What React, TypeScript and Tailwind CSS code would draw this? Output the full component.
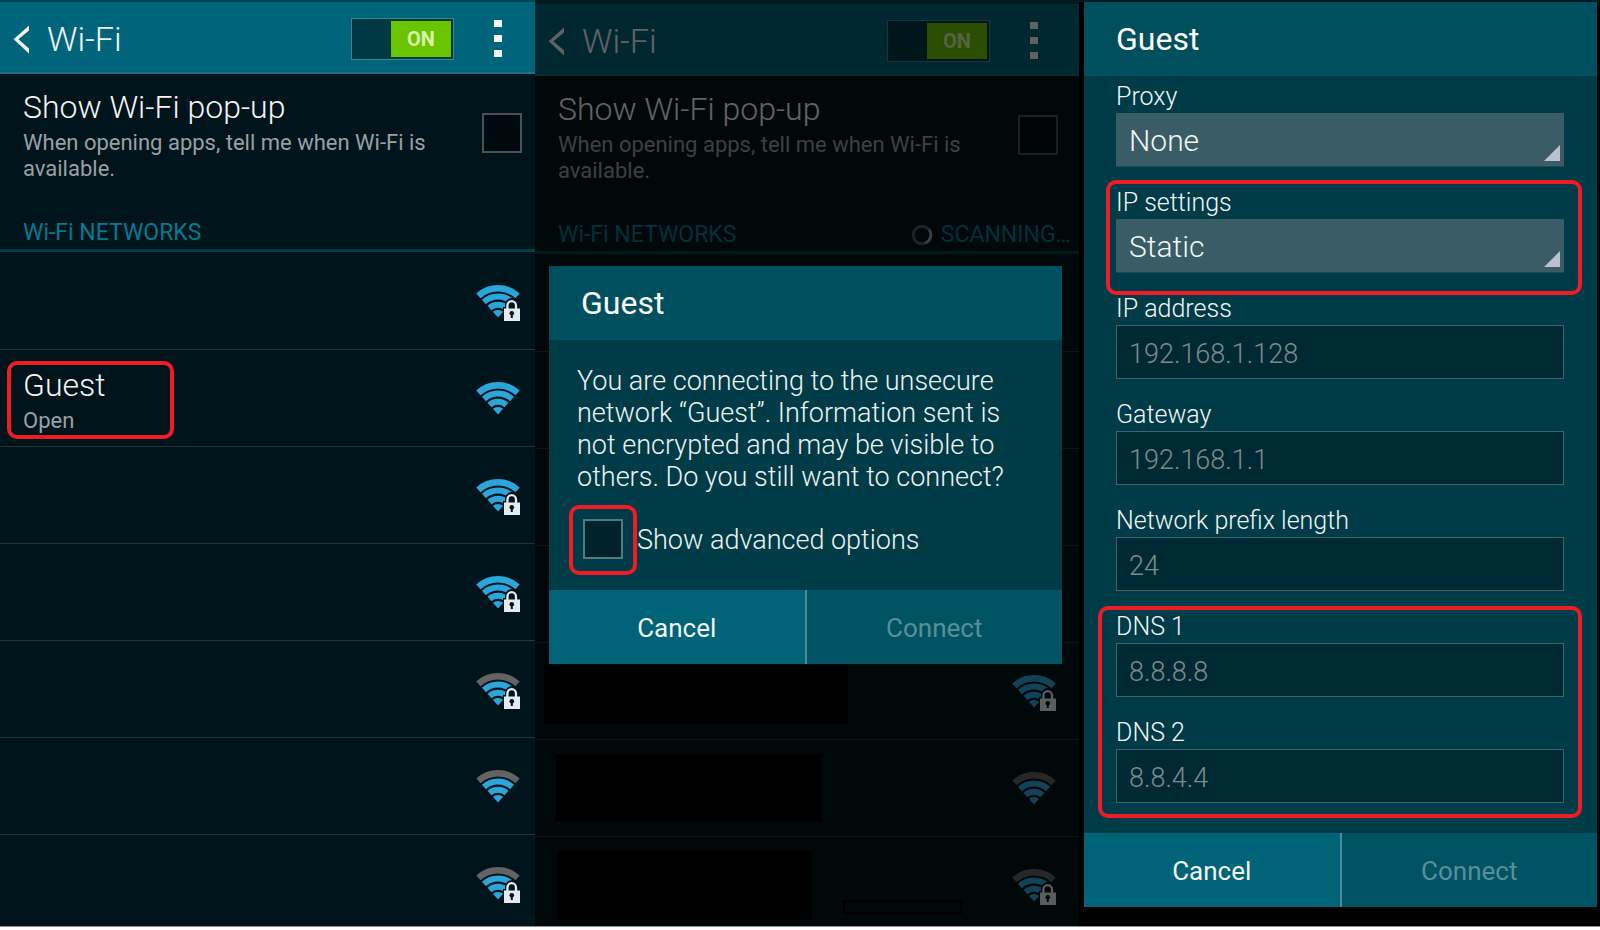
import { useState } from "react";
import clsx from "clsx";

type Network = {
  name?: string;
  status?: string;
  secured: boolean;
  weak?: boolean;
};

const networks: Network[] = [
  { secured: true },
  { name: "Guest", status: "Open", secured: false },
  { secured: true },
  { secured: true },
  { secured: true, weak: true },
  { secured: false, weak: true },
  { secured: true, weak: true },
];

const nearbyNetworks: Network[] = [
  { secured: true },
  { secured: false },
  { secured: true },
  { secured: true },
  { secured: true },
  { secured: false, weak: true },
  { secured: true, weak: true },
];

const addressFields = [
  { id: "ip-address", label: "IP address", value: "192.168.1.128" },
  { id: "gateway", label: "Gateway", value: "192.168.1.1" },
  { id: "prefix", label: "Network prefix length", value: "24" },
];

const dnsFields = [
  { id: "dns1", label: "DNS 1", value: "8.8.8.8" },
  { id: "dns2", label: "DNS 2", value: "8.8.4.4" },
];

function SignalIcon({ secured, weak }: { secured: boolean; weak?: boolean }) {
  return (
    <svg width="45" height="39" viewBox="0 0 45 39" fill="none" className="shrink-0">
      <path d="M2.4 11.8A29.25 29.25 0 0 1 41.6 11.8" stroke={weak ? "#636363" : "#2ba6da"} strokeWidth="6.4" />
      <path d="M7.95 17.9A21 21 0 0 1 36.05 17.9" stroke="#2ba6da" strokeWidth="6" />
      <path d="M13.5 24A12.75 12.75 0 0 1 30.5 24" stroke="#2ba6da" strokeWidth="6" />
      <path d="M22 33.5L16.9 27.8A8 8 0 0 1 27.1 27.8Z" fill="#2ba6da" />
      {secured && (
        <>
          <path d="M27 38V23h2v-2a6.5 6.5 0 0 1 14 0v2h2v15z" fill="#00141b" />
          <path d="M31.4 25v-3.2a4.3 4.6 0 0 1 8.6 0V25" stroke="#e3ebf0" strokeWidth="2.3" />
          <rect x="28" y="24.5" width="16" height="12.5" fill="#e3ebf0" />
          <circle cx="35.8" cy="29.2" r="2.3" fill="#00141b" />
          <path d="M35.8 29v5" stroke="#00141b" strokeWidth="2" />
        </>
      )}
    </svg>
  );
}

function WifiScreen({ items, scanning = false }: { items: Network[]; scanning?: boolean }) {
  const [on, setOn] = useState(true);
  const edge = scanning ? "pr-2" : "pr-0";
  const popupId = scanning ? "popup-scan" : "popup";

  return (
    <div className={clsx("h-full overflow-hidden bg-[#00141b]", scanning ? "border-t-4 border-[#004450]" : "border-t-2 border-[#004450]")}>
      <header className={clsx("h-[72px] border-b-2 border-[#1f6f7e] bg-[#00657a]", edge)}>
        <div className="flex h-full items-center pl-3 pr-[33px] pt-[3px]">
          <button type="button" aria-label="Back" className="mr-[15px] shrink-0">
            <svg width="20" height="30" viewBox="0 0 20 30" fill="none">
              <path d="M17 1.5v5L6.4 15.2 17 24.5v5L1.6 15.2z" fill="#f2f6f7" />
            </svg>
          </button>
          <h1 className="pt-px text-[34px] font-light leading-10 text-[#f2f6f7]">Wi-Fi</h1>
          <button
            type="button"
            role="switch"
            aria-checked={on}
            onClick={() => setOn(!on)}
            className="ml-auto flex h-[42px] w-[103px] shrink-0 justify-end border border-[#3f8391] bg-[#003844] p-0.5"
          >
            <span className="flex h-full w-[60px] items-center justify-center bg-[#6ac500] text-xl font-bold text-[#d9f3a8]">
              ON
            </span>
          </button>
          <button type="button" aria-label="More options" className="ml-10 flex shrink-0 flex-col gap-2">
            <span className="h-[7px] w-2 bg-[#f2f6f7]" />
            <span className="h-[7px] w-2 bg-[#f2f6f7]" />
            <span className="h-[7px] w-2 bg-[#f2f6f7]" />
          </button>
        </div>
      </header>

      <div className={edge}>
        <div className="flex h-[126px] justify-between pl-[23px] pr-[13px] pt-[13px]">
          <label htmlFor={popupId} className="w-[425px]">
            <span className="block text-[32px] font-light leading-10 text-[#f5f5f5]">Show Wi-Fi pop-up</span>
            <span className="mt-[3px] block text-[22px] leading-[26px] text-[#98a1a4]">
              When opening apps, tell me when Wi-Fi is available.
            </span>
          </label>
          <input
            id={popupId}
            type="checkbox"
            className="mt-[26px] size-10 shrink-0 appearance-none border-2 border-[#4a5458] bg-[#000a0e] checked:bg-[#6ac500]"
          />
        </div>
      </div>

      <div className={clsx("h-[52px] border-b-3 border-[#003f4a]", edge)}>
        <div className="flex h-full items-end justify-between pl-[23px]">
          <h2 className="text-[23px] leading-8 text-[#007b92]">Wi-Fi NETWORKS</h2>
          {scanning && (
            <div className="flex items-center gap-2 text-[23px] leading-8 text-[#007b92]">
              <svg width="22" height="22" viewBox="0 0 22 22" fill="none">
                <circle cx="11" cy="11" r="8.8" stroke="#3a5f69" strokeWidth="3" />
                <path d="M18 5.5A8.8 8.8 0 0 1 14.5 19" stroke="#8aa3ab" strokeWidth="2.6" />
              </svg>
              SCANNING…
            </div>
          )}
        </div>
      </div>

      <ul className="pt-px">
        {items.map((network, i) => (
          <li key={i} className={clsx("h-[97px] border-b border-[#26343a]", edge)}>
            <div className="flex items-start justify-between pl-[23px] pr-3.5">
              <div className="pt-[15px]">
                {network.name && (
                  <>
                    <p className="text-[32px] font-light leading-10 text-[#f5f5f5]">{network.name}</p>
                    <p className="text-[22px] leading-8 text-[#98a1a4]">{network.status}</p>
                  </>
                )}
              </div>
              <div className="pt-[31px]">
                <SignalIcon secured={network.secured} weak={network.weak} />
              </div>
            </div>
          </li>
        ))}
      </ul>
    </div>
  );
}

function DialogButtons() {
  return (
    <div className="flex h-[74px] text-[26px]">
      <button type="button" className="flex-1 border-r-2 border-[#4d8b98] bg-[#006378] pt-[3px] text-[#f2f6f7]">
        Cancel
      </button>
      <button type="button" disabled className="flex-1 bg-[#005363] pt-[3px] text-[#5a8f99]">
        Connect
      </button>
    </div>
  );
}

function SelectField({ id, label, options }: { id: string; label: string; options: string[] }) {
  return (
    <div className="pt-1">
      <label htmlFor={id} className="block text-[25px] font-light leading-8 text-[#f2f6f7]">
        {label}
      </label>
      <div className="relative">
        <select
          id={id}
          className="h-[54px] w-full appearance-none border-b border-[#1f4a55] bg-[#3a5c67] pl-[13px] pt-px text-[30px] font-light text-[#f2f6f7]"
        >
          {options.map((option) => (
            <option key={option}>{option}</option>
          ))}
        </select>
        <svg width="16" height="16" viewBox="0 0 16 16" className="pointer-events-none absolute bottom-1.5 right-1">
          <path d="M16 0v16H0z" fill="#bac2cc" />
        </svg>
      </div>
    </div>
  );
}

function TextField({ id, label, value }: { id: string; label: string; value: string }) {
  return (
    <div className="pt-1">
      <label htmlFor={id} className="block text-[25px] font-light leading-8 text-[#f2f6f7]">
        {label}
      </label>
      <input
        id={id}
        type="text"
        defaultValue={value}
        className="h-[54px] w-full border border-[#3d646d] bg-[#002a33] px-3 pt-[3px] text-[27px] font-light text-[#7d8a8d]"
      />
    </div>
  );
}

export default function App() {
  return (
    <div className="h-screen overflow-hidden bg-white pb-[3px] font-['Roboto',sans-serif]">
      <main className="grid h-full grid-cols-[535fr_544fr_521fr] border-b border-[#8f8f8f] bg-black">
        <section className="relative min-h-0">
          <WifiScreen items={networks} />
          <div className="pointer-events-none absolute left-[7px] top-[361px] h-[78px] w-[167px] rounded-[10px] border-4 border-[#ee1c24]" />
        </section>

        <section className="relative min-h-0">
          <WifiScreen items={nearbyNetworks} scanning />
          <div className="absolute inset-0 bg-black/60" />

          {/* blacked-out network names */}
          <div className="absolute left-[9px] top-[665px] h-[59px] w-[304px] bg-black" />
          <div className="absolute left-[21px] top-[754px] h-[68px] w-[266px] bg-black" />
          <div className="absolute left-[22px] top-[850px] h-[70px] w-[255px] bg-black" />
          <div className="absolute left-[308px] top-[900px] h-[14px] w-[119px] border-2 border-black" />

          <div role="dialog" aria-label="Guest" className="absolute left-3.5 right-[17px] top-[266px]">
            <h2 className="h-[74px] bg-[#004f5e] pl-8 pt-[17px] text-[32px] leading-10 text-white">Guest</h2>
            <div className="h-[250px] bg-[#003b48] px-7 pt-[25px] text-[27px] text-[#eef2f3]">
              <p className="w-[440px] font-light leading-8">
                You are connecting to the unsecure network “Guest”. Information sent is not encrypted and may be
                visible to others. Do you still want to connect?
              </p>
              <div className="flex items-center pl-1.5 pt-[25px]">
                <div className="relative size-10">
                  <input
                    id="advanced"
                    type="checkbox"
                    className="size-10 appearance-none border-2 border-[#527a83] bg-[#00232b] checked:bg-[#6ac500]"
                  />
                  <div className="pointer-events-none absolute -inset-x-3.5 -bottom-4 -top-3.5 rounded-[10px] border-4 border-[#ee1c24]" />
                </div>
                <label htmlFor="advanced" className="pl-3.5 pt-0.5 font-light">
                  Show advanced options
                </label>
              </div>
            </div>
            <DialogButtons />
          </div>
        </section>

        <section className="relative flex min-h-0 flex-col border-t-2 border-[#001b21] pl-[5px] pr-[3px]">
          <div role="dialog" aria-label="Guest network settings">
            <h2 className="h-[74px] bg-[#004f5e] pl-8 pt-[17px] text-[32px] leading-10 text-white">Guest</h2>
            <form className="flex h-[757px] flex-col gap-4 bg-[#003b48] pl-8 pr-[33px] pt-px">
              <SelectField id="proxy" label="Proxy" options={["None", "Manual"]} />
              <div className="relative">
                <SelectField id="ip-settings" label="IP settings" options={["Static", "DHCP"]} />
                <div className="pointer-events-none absolute -bottom-[22px] -left-2.5 -right-[18px] -top-[3px] rounded-[10px] border-4 border-[#ee1c24]" />
              </div>
              {addressFields.map((field) => (
                <TextField key={field.id} {...field} />
              ))}
              <div className="relative flex flex-col gap-4">
                {dnsFields.map((field) => (
                  <TextField key={field.id} {...field} />
                ))}
                <div className="pointer-events-none absolute -bottom-[15px] -left-[18px] -right-[18px] -top-[1px] rounded-[10px] border-4 border-[#ee1c24]" />
              </div>
            </form>
            <DialogButtons />
          </div>
        </section>
      </main>
    </div>
  );
}
